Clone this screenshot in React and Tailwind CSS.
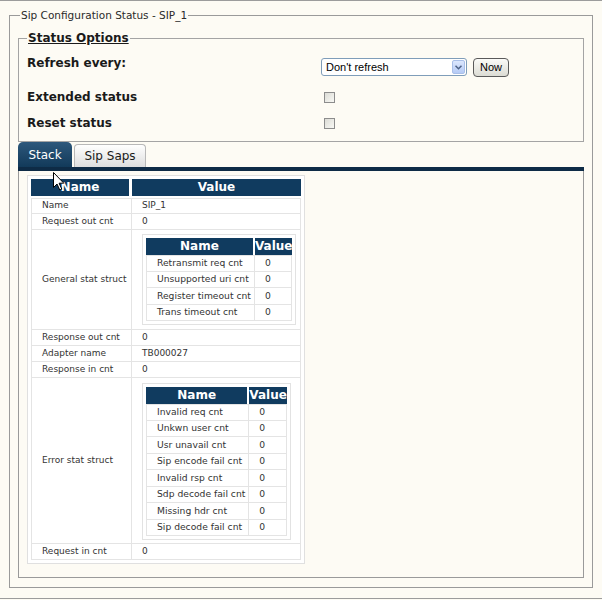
import React from 'react';

const generalStats = [
  ['Retransmit req cnt', '0'],
  ['Unsupported uri cnt', '0'],
  ['Register timeout cnt', '0'],
  ['Trans timeout cnt', '0'],
];

const errorStats = [
  ['Invalid req cnt', '0'],
  ['Unkwn user cnt', '0'],
  ['Usr unavail cnt', '0'],
  ['Sip encode fail cnt', '0'],
  ['Invalid rsp cnt', '0'],
  ['Sdp decode fail cnt', '0'],
  ['Missing hdr cnt', '0'],
  ['Sip decode fail cnt', '0'],
];

function NestedTable({ rows, my }) {
  return (
    <div className={`block w-fit border border-[#e2e2e2] bg-white p-[3px] ${my}`}>
      <table className="border-separate border-spacing-0">
        <thead>
          <tr>
            <th className="h-[17px] bg-[#103b5f] border-r-[2px] border-white px-0 text-center text-[12px] leading-[17px] font-bold text-white">
              Name
            </th>
            <th className="h-[17px] bg-[#103b5f] px-0 text-center text-[12px] leading-[17px] font-bold text-white">
              Value
            </th>
          </tr>
        </thead>
        <tbody>
          {rows.map(([k, v], i) => (
            <tr key={k}>
              <td
                className={`h-[16.5px] border-b border-r border-l border-[#e4e4e4] pl-[10px] pr-[3px] text-left text-[9.2px] text-[#333] whitespace-nowrap ${i === 0 ? 'border-t' : ''}`}
              >
                {k}
              </td>
              <td
                className={`h-[16.5px] border-b border-r border-[#e4e4e4] pl-[10px] text-left text-[9.2px] text-[#333] ${i === 0 ? 'border-t' : ''}`}
              >
                {v}
              </td>
            </tr>
          ))}
        </tbody>
      </table>
    </div>
  );
}

const mainRows = [
  ['Name', 'SIP_1'],
  ['Request out cnt', '0'],
  ['General stat struct', <NestedTable rows={generalStats} my="mt-[4px] mb-[4px]" />],
  ['Response out cnt', '0'],
  ['Adapter name', 'TB000027'],
  ['Response in cnt', '0'],
  ['Error stat struct', <NestedTable rows={errorStats} my="mt-[5px] mb-[3px]" />],
  ['Request in cnt', '0'],
];

function Checkbox() {
  return (
    <div className="mt-[2px] ml-[3px] h-[11px] w-[11px] border border-[#8c8c8c] bg-gradient-to-br from-[#dcdcd6] to-[#f8f8f4]" />
  );
}

export default function App() {
  return (
    <div className="relative h-[600px] w-[602px] bg-[#fdfbf4] pb-[1px] font-['DejaVu_Sans',sans-serif] text-[#222]">
      <div className="h-full border-y border-[#9c9c9c] pt-[7px]">
        {/* Outer fieldset */}
        <fieldset className="ml-[9px] w-[584px] border border-[#9a9a9a] px-[8px] pb-[9px]">
          <legend className="ml-[2px] px-[1px] text-[10.5px] leading-[14px] text-[#2a2a2a]">
            Sip Configuration Status - SIP_1
          </legend>

          {/* Status options */}
          <fieldset className="mt-[9px] border border-[#a4a4a4] px-[8px]">
            <legend className="px-[1px] text-[12px] leading-[15px] font-bold text-[#1a1a1a] underline">
              Status Options
            </legend>
            <div className="mt-[10px] grid grid-cols-[294px_1fr] text-[12px] leading-[15px] font-bold text-[#1a1a1a]">
              <div className="h-[34px]">Refresh every:</div>
              <div className="flex h-[34px] items-start gap-[6px] pt-[2px]">
                <div className="flex h-[18px] w-[146px] items-center justify-between rounded-[3px] border border-[#7f9db9] bg-white pl-[4px] pr-[1px] font-['Liberation_Sans',sans-serif] text-[11px] font-normal text-black">
                  <span>Don't refresh</span>
                  <span className="flex h-[14px] w-[13px] items-center justify-center rounded-[2px] border border-[#a9bfe8] bg-gradient-to-b from-[#dce7fd] to-[#b5caf5]">
                    <svg width="7" height="5" viewBox="0 0 7 5">
                      <path d="M0.5 0.8 L3.5 3.8 L6.5 0.8" fill="none" stroke="#4d6185" strokeWidth="1.5" />
                    </svg>
                  </span>
                </div>
                <div className="flex h-[19px] w-[36px] items-center justify-center rounded-[4px] border border-[#5a5a5a] bg-gradient-to-b from-[#fbfbf8] to-[#dcdcd4] font-['Liberation_Sans',sans-serif] text-[11px] font-normal text-black">
                  Now
                </div>
              </div>
              <div className="h-[26px]">Extended status</div>
              <div className="h-[26px]">
                <Checkbox />
              </div>
              <div className="h-[25px]">Reset status</div>
              <div className="h-[25px]">
                <Checkbox />
              </div>
            </div>
          </fieldset>

          {/* Tabs */}
          <div className="flex h-[25px] items-end gap-[2px]">
            <div className="flex h-[25px] w-[54px] items-center justify-center rounded-t-[5px] bg-gradient-to-b from-[#2d587c] to-[#123a5a] text-[12px] text-white">
              Stack
            </div>
            <div className="flex h-[23px] w-[72px] items-center justify-center rounded-t-[4px] border border-b-0 border-[#b8b8b8] bg-gradient-to-b from-[#ffffff] to-[#dedede] text-[12px] text-[#1a1a1a]">
              Sip Saps
            </div>
          </div>
          <div className="h-[4px] bg-[#0e2b46]" />

          {/* Tab panel */}
          <div className="h-[407px] border-x border-b border-[#9a9a9a] pl-[8px] pt-[4px]">
            <div className="block w-fit border border-[#e0e0e0] bg-white p-[3px]">
              <table className="border-separate border-spacing-0">
                <thead>
                  <tr>
                    <th className="h-[19px] w-[101px] border-r-[3px] border-b-[2px] border-white bg-[#103b5f] text-center text-[12px] leading-[17px] font-bold text-white">
                      Name
                    </th>
                    <th className="h-[19px] w-[169px] border-b-[2px] border-white bg-[#103b5f] text-center text-[12px] leading-[17px] font-bold text-white">
                      Value
                    </th>
                  </tr>
                </thead>
                <tbody>
                  {mainRows.map(([k, v], i) => (
                    <tr key={k}>
                      <td
                        className={`h-[16px] border-b border-r border-l border-[#e4e4e4] pl-[10px] align-middle text-[9px] text-[#333] whitespace-nowrap ${i === 0 ? 'border-t' : ''}`}
                      >
                        {k}
                      </td>
                      <td
                        className={`h-[16px] border-b border-r border-[#e4e4e4] pl-[10px] align-middle text-[9px] text-[#333] ${i === 0 ? 'border-t' : ''}`}
                      >
                        {v}
                      </td>
                    </tr>
                  ))}
                </tbody>
              </table>
            </div>
          </div>
        </fieldset>
      </div>

      {/* Mouse pointer */}
      <svg className="absolute left-[53px] top-[172px]" width="12" height="19" viewBox="0 0 12 19">
        <path d="M0.5 0.5 L0.5 15.5 L4 12 L6.8 18 L8.8 17.1 L6.1 11.2 L10.8 11.2 Z" fill="#fff" stroke="#000" strokeWidth="1" />
      </svg>
    </div>
  );
}
